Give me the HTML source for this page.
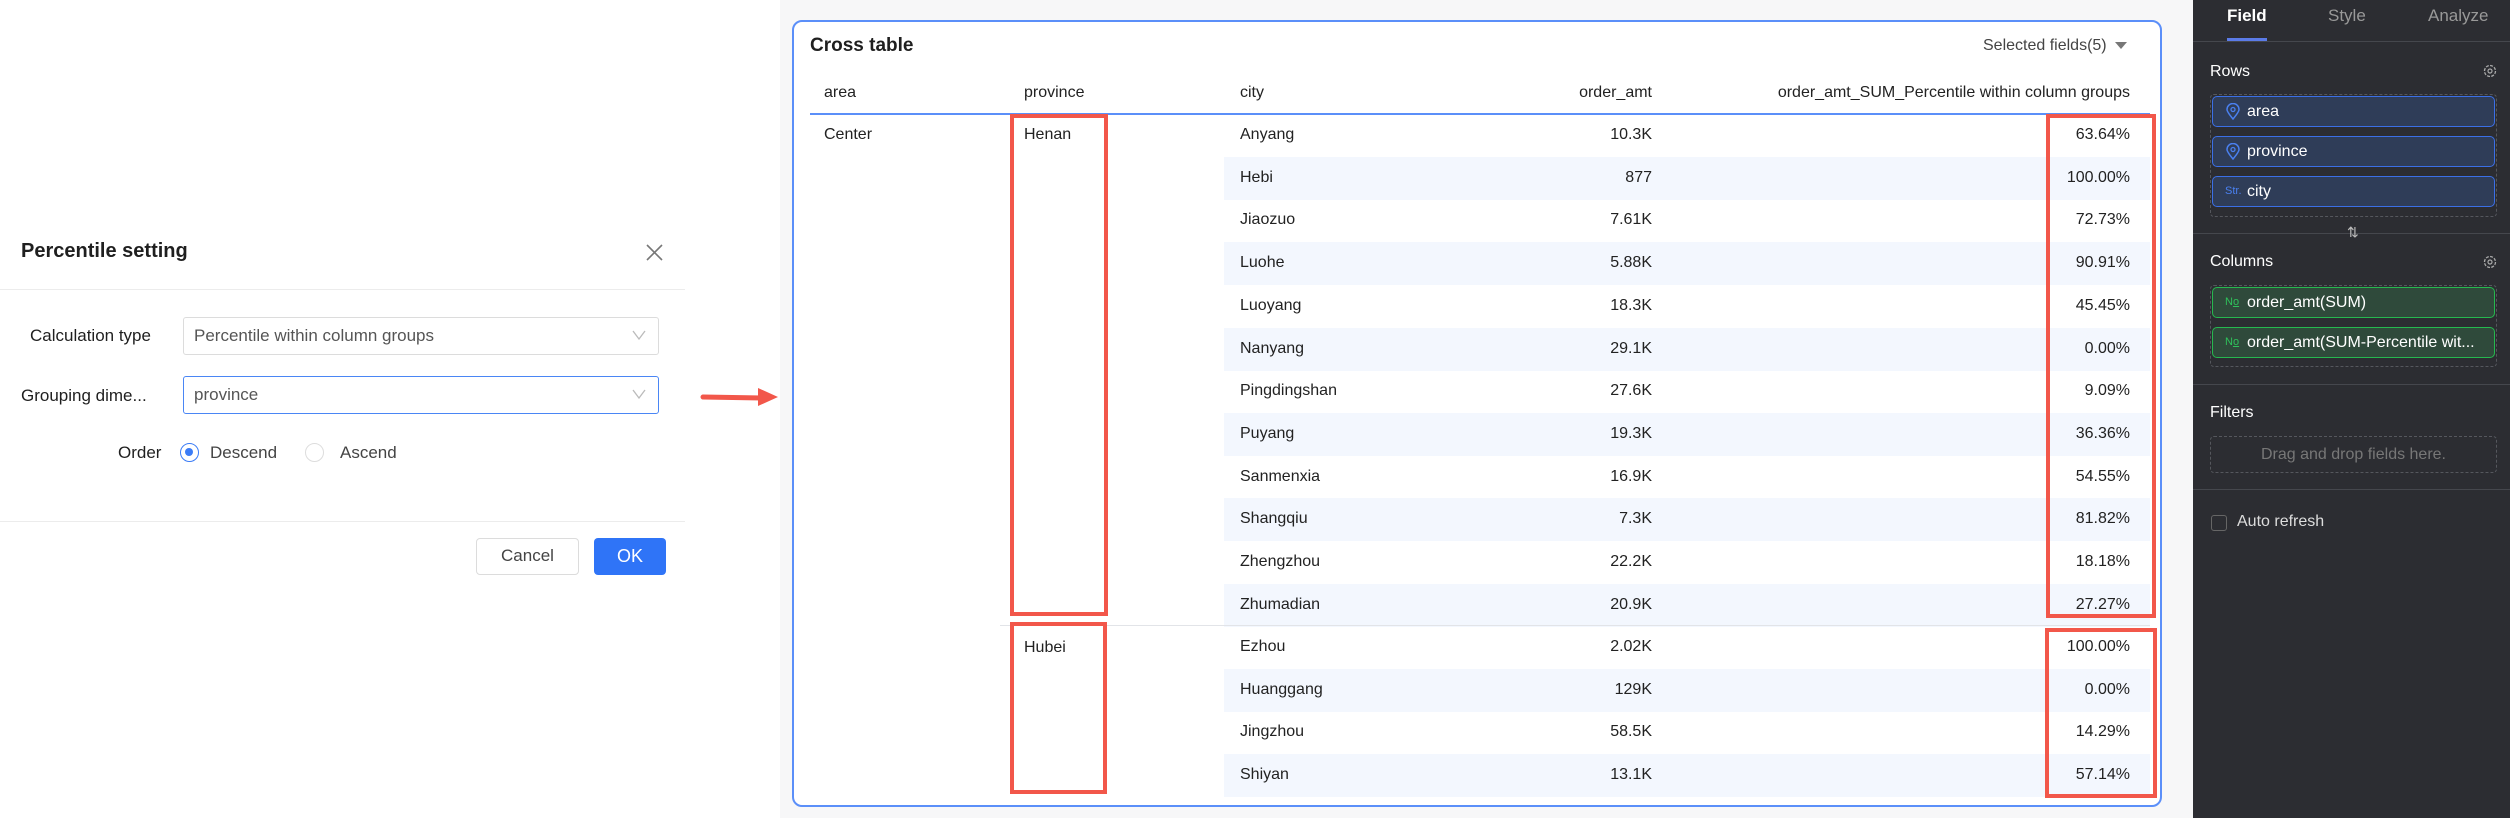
<!DOCTYPE html>
<html><head><meta charset="utf-8"><style>
*{box-sizing:border-box;margin:0;padding:0}
body{width:2510px;height:818px;overflow:hidden;background:#fff;font-family:"Liberation Sans",Arial,sans-serif;position:relative;color:#1f1f1f}
.a{position:absolute;white-space:nowrap}
.mid{background:#f7f7f8;position:absolute;left:780px;top:0;width:1413px;height:818px}
.card{position:absolute;left:792px;top:20px;width:1370px;height:787px;background:#fff;border:2px solid #5b8ff9;border-radius:10px}
.t{font-size:16px;color:#222}
.r{text-align:right}
.stripe{position:absolute;left:1224px;width:926px;height:43px;background:#f3f7fe}
.rb{position:absolute;border:4px solid #f2574a}
.dark{position:absolute;left:2193px;top:0;width:317px;height:818px;background:#2c2d32}
.chip{position:absolute;left:2212px;width:283px;height:31px;border-radius:5px;color:#fff;font-size:16px;line-height:29px;padding-left:34px}
.cb{background:#2f3d58;border:1.5px solid #3b6fe6}
.cg{background:#2f4a3b;border:1.5px solid #26b84f}
.ic{position:absolute;left:12px;top:0;font-size:11px}
.lbl{color:#fff;font-size:16px}
.div{position:absolute;left:2193px;width:317px;height:1px;background:#45474d}
</style></head><body>
<div class="a" style="left:21px;top:240px;font-size:20px;font-weight:bold">Percentile setting</div>
<svg class="a" style="left:645px;top:243px" width="19" height="19"><path d="M2 2L17 17M17 2L2 17" stroke="#777" stroke-width="1.6"/></svg>
<div class="a" style="left:0;top:289px;width:685px;height:1px;background:#ececec"></div>
<div class="a" style="left:30px;top:326px;font-size:17px">Calculation type</div>
<div class="a" style="left:183px;top:317px;width:476px;height:38px;border:1.5px solid #dcdcdc;border-radius:3px;font-size:17px;color:#555;padding:8px 0 0 10px">Percentile within column groups</div>
<div class="a" style="left:21px;top:386px;font-size:17px">Grouping dime...</div>
<div class="a" style="left:183px;top:376px;width:476px;height:38px;border:1.5px solid #4a86f5;border-radius:3px;font-size:17px;color:#555;padding:8px 0 0 10px">province</div>
<svg class="a" style="left:632px;top:330px" width="14" height="10"><path d="M1 1L7 9L13 1" stroke="#bbb" fill="none" stroke-width="1.3"/></svg>
<svg class="a" style="left:632px;top:389px" width="14" height="10"><path d="M1 1L7 9L13 1" stroke="#bbb" fill="none" stroke-width="1.3"/></svg>
<div class="a" style="left:118px;top:443px;font-size:17px">Order</div>
<div class="a" style="left:180px;top:443px;width:19px;height:19px;border:1.5px solid #3b7cf6;border-radius:50%"><div style="margin:4px;width:8px;height:8px;border-radius:50%;background:#3b7cf6"></div></div>
<div class="a" style="left:210px;top:443px;font-size:17px;color:#444">Descend</div>
<div class="a" style="left:305px;top:443px;width:19px;height:19px;border:1.5px solid #ddd;border-radius:50%"></div>
<div class="a" style="left:340px;top:443px;font-size:17px;color:#444">Ascend</div>
<div class="a" style="left:0;top:521px;width:685px;height:1px;background:#ececec"></div>
<div class="a" style="left:476px;top:538px;width:103px;height:37px;border:1.5px solid #dcdcdc;border-radius:4px;font-size:17px;color:#444;text-align:center;line-height:34px">Cancel</div>
<div class="a" style="left:594px;top:538px;width:72px;height:37px;background:#2f74f7;border-radius:4px;font-size:18px;color:#fff;text-align:center;line-height:37px">OK</div>
<div class="mid"></div>
<svg class="a" style="left:700px;top:384px" width="80" height="24"><path d="M3 13L62 14" stroke="#f2574a" stroke-width="5" stroke-linecap="round"/><path d="M58 4L78 13L58 22Z" fill="#f2574a"/></svg>
<div class="card"></div>
<div class="a" style="left:810px;top:35px;font-size:19px;font-weight:bold">Cross table</div>
<div class="a" style="left:1983px;top:37px;font-size:16px;color:#444">Selected fields(5)</div>
<svg class="a" style="left:2115px;top:42px" width="12" height="8"><path d="M0 0H12L6 7Z" fill="#777"/></svg>
<div class="a t" style="left:824px;top:84px">area</div>
<div class="a t" style="left:1024px;top:84px">province</div>
<div class="a t" style="left:1240px;top:84px">city</div>
<div class="a t r" style="left:1452px;width:200px;top:84px">order_amt</div>
<div class="a t r" style="left:1730px;width:400px;top:84px">order_amt_SUM_Percentile within column groups</div>
<div class="a" style="left:810px;top:113px;width:1340px;height:2px;background:#5b8ff9"></div>
<div id="rows"></div>
<div class="a" style="left:1000px;top:625px;width:1150px;height:1px;background:#e2e4e8"></div>
<div class="a t" style="left:824px;top:126px">Center</div>
<div class="a t" style="left:1024px;top:126px">Henan</div>
<div class="a t" style="left:1024px;top:639px">Hubei</div>
<div class="rb" style="left:1010px;top:114px;width:98px;height:502px"></div>
<div class="rb" style="left:1010px;top:622px;width:97px;height:172px"></div>
<div class="rb" style="left:2046px;top:114px;width:110px;height:504px"></div>
<div class="rb" style="left:2045px;top:628px;width:112px;height:170px"></div>
<div class="dark"></div>
<div class="a" style="left:2227px;top:6px;font-size:17px;color:#fff;font-weight:bold">Field</div>
<div class="a" style="left:2328px;top:6px;font-size:17px;color:#999">Style</div>
<div class="a" style="left:2428px;top:6px;font-size:17px;color:#999">Analyze</div>
<div class="a" style="left:2227px;top:38px;width:40px;height:3px;background:#5b7be8"></div>
<div class="div" style="top:41px"></div>
<div class="a lbl" style="left:2210px;top:63px">Rows</div>
<div class="a lbl" style="left:2210px;top:253px">Columns</div>
<div class="a lbl" style="left:2210px;top:404px">Filters</div>
<svg class="a" style="left:2482px;top:63px" width="16" height="16"><circle cx="8" cy="8" r="5.5" fill="none" stroke="#aaa" stroke-width="1.3" stroke-dasharray="3 1.3"/><circle cx="8" cy="8" r="2" fill="none" stroke="#aaa" stroke-width="1.2"/></svg>
<svg class="a" style="left:2482px;top:254px" width="16" height="16"><circle cx="8" cy="8" r="5.5" fill="none" stroke="#aaa" stroke-width="1.3" stroke-dasharray="3 1.3"/><circle cx="8" cy="8" r="2" fill="none" stroke="#aaa" stroke-width="1.2"/></svg>
<div class="a" style="left:2210px;top:94px;width:287px;height:123px;border:1px dashed #55575d;border-radius:4px"></div>
<div class="chip cb" style="top:96px"><svg class="ic" style="top:6px" width="16" height="18"><path d="M8 16C3 10 2 8 2 6.5A6 6 0 0 1 14 6.5C14 8 13 10 8 16Z" fill="none" stroke="#4a80f0" stroke-width="1.5"/><circle cx="8" cy="6.5" r="2" fill="none" stroke="#4a80f0" stroke-width="1.3"/></svg>area</div>
<div class="chip cb" style="top:136px"><svg class="ic" style="top:6px" width="16" height="18"><path d="M8 16C3 10 2 8 2 6.5A6 6 0 0 1 14 6.5C14 8 13 10 8 16Z" fill="none" stroke="#4a80f0" stroke-width="1.5"/><circle cx="8" cy="6.5" r="2" fill="none" stroke="#4a80f0" stroke-width="1.3"/></svg>province</div>
<div class="chip cb" style="top:176px"><span class="ic" style="color:#4a80f0">Str.</span>city</div>
<div class="div" style="top:233px"></div>
<div class="a" style="left:2347px;top:224px;color:#bbb;font-size:14px">⇅</div>
<div class="a" style="left:2210px;top:285px;width:287px;height:82px;border:1px dashed #55575d;border-radius:4px"></div>
<div class="chip cg" style="top:287px"><span class="ic" style="color:#2fc25b">N<u>o</u></span>order_amt(SUM)</div>
<div class="chip cg" style="top:327px"><span class="ic" style="color:#2fc25b">N<u>o</u></span>order_amt(SUM-Percentile wit...</div>
<div class="div" style="top:384px"></div>
<div class="a" style="left:2210px;top:436px;width:287px;height:37px;border:1px dashed #55575d;border-radius:4px;color:#777;font-size:16px;text-align:center;line-height:35px">Drag and drop fields here.</div>
<div class="div" style="top:489px"></div>
<div class="a" style="left:2211px;top:515px;width:16px;height:16px;border:1px solid #666;border-radius:3px"></div>
<div class="a" style="left:2237px;top:513px;font-size:16px;color:#ddd">Auto refresh</div>
<script>
(function(){
var d=[["Anyang","10.3K","63.64%"],["Hebi","877","100.00%"],["Jiaozuo","7.61K","72.73%"],["Luohe","5.88K","90.91%"],["Luoyang","18.3K","45.45%"],["Nanyang","29.1K","0.00%"],["Pingdingshan","27.6K","9.09%"],["Puyang","19.3K","36.36%"],["Sanmenxia","16.9K","54.55%"],["Shangqiu","7.3K","81.82%"],["Zhengzhou","22.2K","18.18%"],["Zhumadian","20.9K","27.27%"],["Ezhou","2.02K","100.00%"],["Huanggang","129K","0.00%"],["Jingzhou","58.5K","14.29%"],["Shiyan","13.1K","57.14%"]];
var h="";for(var i=0;i<d.length;i++){var k=i<12?i:i-12,y=(i<12?114:626)+k*42.7;
if(k%2==1)h+='<div class="stripe" style="top:'+y+'px"></div>';
h+='<div class="a t" style="left:1240px;top:'+(y+12)+'px">'+d[i][0]+'</div><div class="a t r" style="left:1452px;width:200px;top:'+(y+12)+'px">'+d[i][1]+'</div><div class="a t r" style="left:1930px;width:200px;top:'+(y+12)+'px">'+d[i][2]+'</div>';}
document.getElementById("rows").outerHTML=h;
})();
</script>
</body></html>
